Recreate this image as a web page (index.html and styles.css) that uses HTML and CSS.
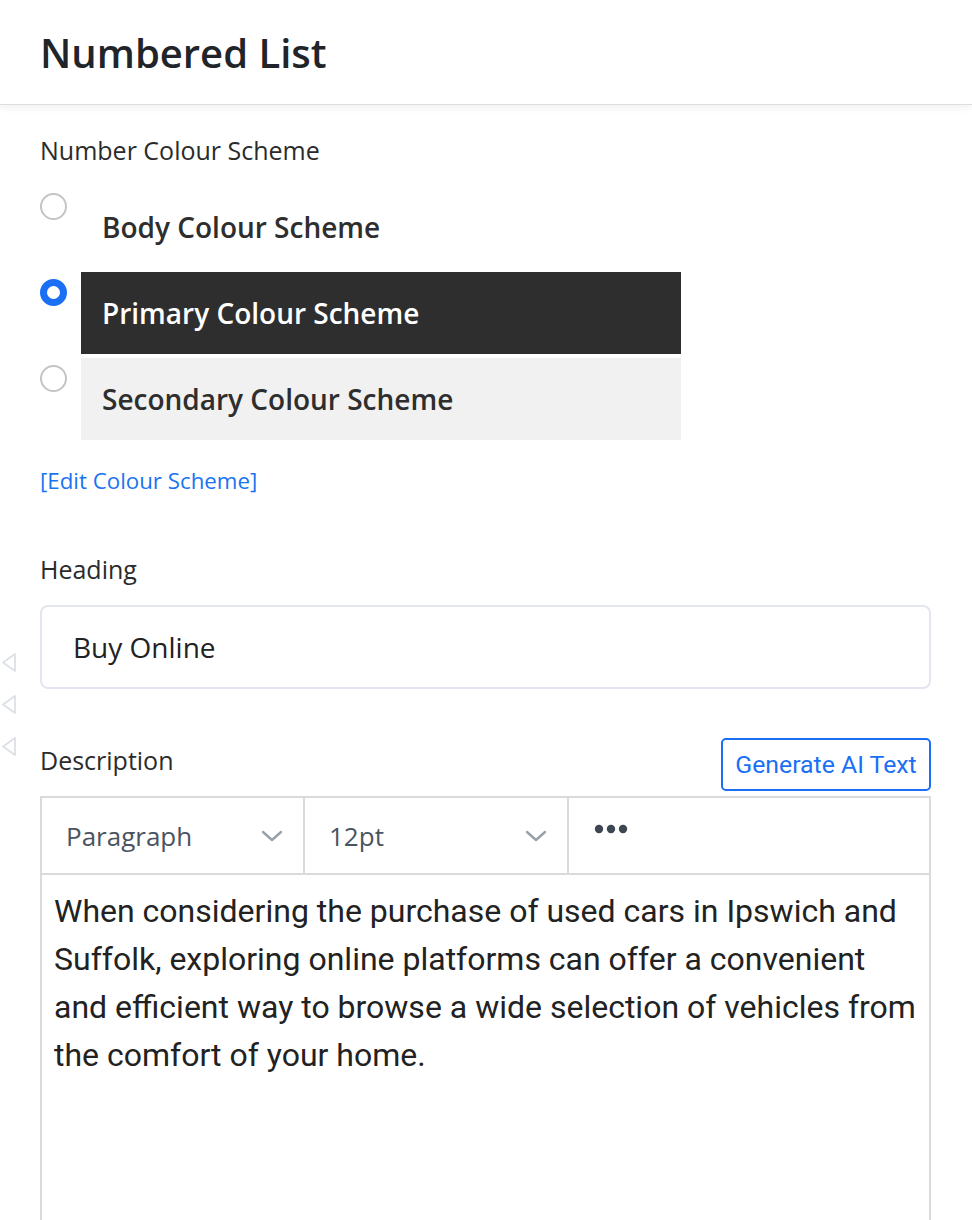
FILE: index.html
```html
<!DOCTYPE html>
<html lang="en">
<head>
<meta charset="utf-8">
<title>Numbered List</title>
<link rel="stylesheet" href="styles.css">
</head>
<body>
<header class="topbar">
  <h1 class="title">Numbered List</h1>
</header>
<main class="panel">
  <div class="field-label scheme-label">Number Colour Scheme</div>
  <div class="options">
    <div class="option">
      <span class="radio"></span>
      <div class="swatch swatch-body">Body Colour Scheme</div>
    </div>
    <div class="option">
      <span class="radio radio-on"></span>
      <div class="swatch swatch-primary">Primary Colour Scheme</div>
    </div>
    <div class="option">
      <span class="radio"></span>
      <div class="swatch swatch-secondary">Secondary Colour Scheme</div>
    </div>
  </div>
  <a class="edit-link" href="#">[Edit Colour Scheme]</a>

  <div class="field-label heading-label">Heading</div>
  <div class="text-input">Buy Online</div>

  <div class="desc-row">
    <div class="field-label">Description</div>
    <button class="ai-btn" type="button">Generate AI Text</button>
  </div>
  <div class="editor">
    <div class="toolbar">
      <div class="tool tool-select">
        <span>Paragraph</span>
        <svg class="chev" width="22" height="13" viewBox="0 0 22 13"><polyline points="2,2 11,10 20,2" fill="none" stroke="#9ba1a8" stroke-width="2.4" stroke-linecap="round" stroke-linejoin="round"/></svg>
      </div>
      <div class="tool tool-select">
        <span>12pt</span>
        <svg class="chev" width="22" height="13" viewBox="0 0 22 13"><polyline points="2,2 11,10 20,2" fill="none" stroke="#9ba1a8" stroke-width="2.4" stroke-linecap="round" stroke-linejoin="round"/></svg>
      </div>
      <div class="tool tool-more">
        <svg width="34" height="10" viewBox="0 0 34 10"><circle cx="5" cy="5" r="4.2" fill="#3d4752"/><circle cx="17" cy="5" r="4.2" fill="#3d4752"/><circle cx="29" cy="5" r="4.2" fill="#3d4752"/></svg>
      </div>
    </div>
    <div class="content">When considering the purchase of used cars in Ipswich and Suffolk, exploring online platforms can offer a convenient and efficient way to browse a wide selection of vehicles from the comfort of your home.</div>
  </div>
</main>

<div class="handles">
  <svg class="handle" width="17" height="21" viewBox="0 0 17 21"><polygon points="15,2 15,19 3,10.5" fill="none" stroke="#dde0e5" stroke-width="1.8" stroke-linejoin="round"/></svg>
  <svg class="handle" width="17" height="21" viewBox="0 0 17 21"><polygon points="15,2 15,19 3,10.5" fill="none" stroke="#dde0e5" stroke-width="1.8" stroke-linejoin="round"/></svg>
  <svg class="handle" width="17" height="21" viewBox="0 0 17 21"><polygon points="15,2 15,19 3,10.5" fill="none" stroke="#dde0e5" stroke-width="1.8" stroke-linejoin="round"/></svg>
</div>
</body>
</html>
```

FILE: styles.css
```css
* { box-sizing: border-box; }

html, body {
  margin: 0;
  padding: 0;
  background: #ffffff;
}

body {
  font-family: "Open Sans", "Noto Sans", "Liberation Sans", sans-serif;
  color: #2b2b2b;
  position: relative;
  overflow: hidden;
  height: 1220px;
}

.topbar {
  height: 105px;
  padding-left: 40px;
  display: flex;
  align-items: center;
  border-bottom: 1px solid #dedede;
  box-shadow: 0 3px 8px rgba(0, 0, 0, 0.06);
  position: relative;
  z-index: 1;
}

.title {
  margin: 0;
  font-size: 40px;
  font-weight: 600;
  color: #212529;
}

.panel {
  padding: 0 41px 0 40px;
  display: flex;
  flex-direction: column;
}

.field-label {
  font-size: 25px;
  line-height: 34px;
  color: #2b2b2b;
}

.scheme-label {
  margin-top: 28px;
}

.options {
  margin-top: 19px;
  display: flex;
  flex-direction: column;
  gap: 4px;
}

.option {
  display: flex;
  align-items: flex-start;
  gap: 14px;
}

.radio {
  width: 27px;
  height: 27px;
  border-radius: 50%;
  border: 2px solid #c4c4c4;
  margin-top: 7px;
  flex: none;
  background: #fff;
}

.radio-on {
  border: 7.5px solid #1a6ff5;
}

.swatch {
  width: 600px;
  height: 82px;
  padding-left: 21px;
  display: flex;
  align-items: center;
  font-size: 28px;
  font-weight: 600;
  color: #2e2e2e;
}

.swatch-primary {
  background: #2e2e2e;
  color: #ffffff;
}

.swatch-secondary {
  background: #f1f1f1;
}

.edit-link {
  margin-top: 27px;
  font-size: 22.3px;
  line-height: 28px;
  color: #1a73f0;
  text-decoration: none;
  align-self: flex-start;
}

.heading-label {
  margin-top: 57px;
}

.text-input {
  margin-top: 19px;
  height: 84px;
  border: 2px solid #e3e6ee;
  border-radius: 8px;
  padding-left: 31px;
  display: flex;
  align-items: center;
  font-size: 28px;
  color: #222;
}

.desc-row {
  margin-top: 49px;
  display: flex;
  justify-content: space-between;
  align-items: center;
}

.desc-row .field-label {
  padding-bottom: 10px;
}

.ai-btn {
  height: 53px;
  width: 210px;
  border: 2px solid #1a6ff5;
  border-radius: 5px;
  background: #fff;
  color: #1a6ff5;
  font-family: Roboto, "Liberation Sans", sans-serif;
  font-size: 24.8px;
  padding: 0;
}

.editor {
  margin-top: 5px;
  border: 2px solid #dadada;
  border-bottom: none;
}

.toolbar {
  display: grid;
  grid-template-columns: 263px 264px 1fr;
  height: 77px;
  border-bottom: 2px solid #dadada;
}

.tool {
  display: flex;
  align-items: center;
  border-right: 2px solid #dadada;
  font-size: 26px;
  color: #4a5460;
}

.tool:last-child {
  border-right: none;
}

.tool-select {
  justify-content: space-between;
  padding: 0 20px 0 24px;
}

.tool-select .chev {
  margin-top: 2px;
}

.tool-more {
  align-items: flex-start;
  padding: 26px 0 0 25px;
}

.content {
  min-height: 420px;
  padding: 12px 12px 0 12px;
  font-family: Roboto, "Liberation Sans", sans-serif;
  font-size: 32px;
  line-height: 48px;
  color: #222;
}

.handles {
  position: absolute;
  left: 0;
  top: 652px;
  display: flex;
  flex-direction: column;
  gap: 21px;
}

.handle {
  display: block;
}
```
